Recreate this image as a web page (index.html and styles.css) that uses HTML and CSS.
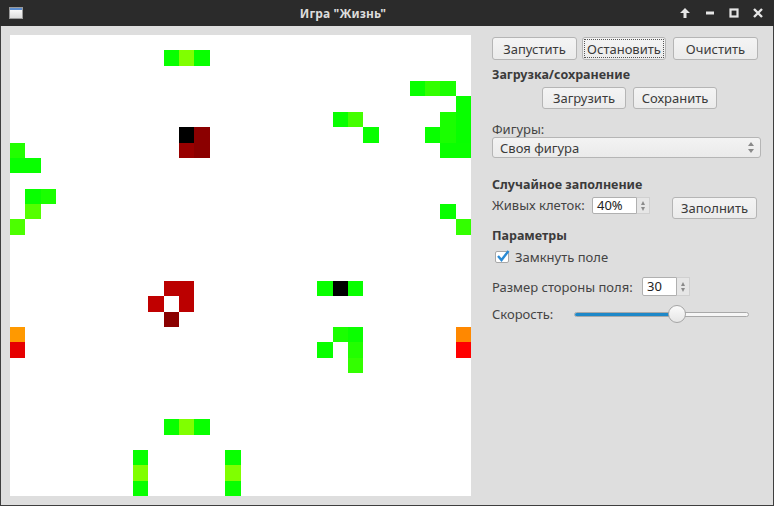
FILE: index.html
```html
<!DOCTYPE html>
<html>
<head>
<meta charset="utf-8">
<link rel="stylesheet" href="styles.css">
</head>
<body>
<div class="window">
  <div class="titlebar">
    <div class="app-icon"><span class="app-icon-top"></span></div>
    <div class="title">Игра "Жизнь"</div>
    <div class="controls">
      <svg class="ctl" width="12" height="10" viewBox="0 0 12 10"><path d="M6 0 L11 5 L7.5 5 L7.5 10 L4.5 10 L4.5 5 L1 5 Z" fill="#e6e6e6"/></svg>
      <svg class="ctl" width="10" height="10" viewBox="0 0 10 10"><rect x="1" y="3.5" width="8" height="3" fill="#e6e6e6"/></svg>
      <svg class="ctl" width="10" height="10" viewBox="0 0 10 10"><rect x="1.5" y="1.5" width="7" height="7" fill="none" stroke="#e6e6e6" stroke-width="2.2"/></svg>
      <svg class="ctl" width="10" height="10" viewBox="0 0 10 10"><path d="M1 1 L9 9 M9 1 L1 9" stroke="#e6e6e6" stroke-width="2.4"/></svg>
    </div>
  </div>
  <div class="content">
    <div class="board">
      <div class="cell" style="grid-area:2/11;background:#08ff00"></div>
      <div class="cell" style="grid-area:2/12;background:#80ff00"></div>
      <div class="cell" style="grid-area:2/13;background:#08ff00"></div>
      <div class="cell" style="grid-area:4/27;background:#08ff00"></div>
      <div class="cell" style="grid-area:4/28;background:#33ff00"></div>
      <div class="cell" style="grid-area:4/29;background:#1aff00"></div>
      <div class="cell" style="grid-area:5/30;background:#08ff00"></div>
      <div class="cell" style="grid-area:6/22;background:#08ff00"></div>
      <div class="cell" style="grid-area:6/23;background:#44ff00"></div>
      <div class="cell" style="grid-area:6/29;background:#1aff00"></div>
      <div class="cell" style="grid-area:6/30;background:#08ff00"></div>
      <div class="cell" style="grid-area:7/12;background:#000000"></div>
      <div class="cell" style="grid-area:7/13;background:#8b0000"></div>
      <div class="cell" style="grid-area:7/24;background:#08ff00"></div>
      <div class="cell" style="grid-area:7/28;background:#08ff00"></div>
      <div class="cell" style="grid-area:7/29;background:#1aff00"></div>
      <div class="cell" style="grid-area:7/30;background:#08ff00"></div>
      <div class="cell" style="grid-area:8/1;background:#22ff00"></div>
      <div class="cell" style="grid-area:8/12;background:#990000"></div>
      <div class="cell" style="grid-area:8/13;background:#8b0000"></div>
      <div class="cell" style="grid-area:8/29;background:#0aff00"></div>
      <div class="cell" style="grid-area:8/30;background:#0aff00"></div>
      <div class="cell" style="grid-area:9/1;background:#08ff00"></div>
      <div class="cell" style="grid-area:9/2;background:#08ff00"></div>
      <div class="cell" style="grid-area:11/2;background:#08ff00"></div>
      <div class="cell" style="grid-area:11/3;background:#1aff00"></div>
      <div class="cell" style="grid-area:12/2;background:#55ff00"></div>
      <div class="cell" style="grid-area:12/29;background:#08ff00"></div>
      <div class="cell" style="grid-area:13/1;background:#4cff00"></div>
      <div class="cell" style="grid-area:13/30;background:#33ff00"></div>
      <div class="cell" style="grid-area:17/11;background:#bb0000"></div>
      <div class="cell" style="grid-area:17/12;background:#bb0000"></div>
      <div class="cell" style="grid-area:17/21;background:#08ff00"></div>
      <div class="cell" style="grid-area:17/22;background:#000000"></div>
      <div class="cell" style="grid-area:17/23;background:#08ff00"></div>
      <div class="cell" style="grid-area:18/10;background:#c00000"></div>
      <div class="cell" style="grid-area:18/12;background:#bb0000"></div>
      <div class="cell" style="grid-area:19/11;background:#8b0000"></div>
      <div class="cell" style="grid-area:20/1;background:#ff9900"></div>
      <div class="cell" style="grid-area:20/22;background:#1aff00"></div>
      <div class="cell" style="grid-area:20/23;background:#0aff00"></div>
      <div class="cell" style="grid-area:20/30;background:#ff8800"></div>
      <div class="cell" style="grid-area:21/1;background:#e60000"></div>
      <div class="cell" style="grid-area:21/21;background:#08ff00"></div>
      <div class="cell" style="grid-area:21/23;background:#22ff00"></div>
      <div class="cell" style="grid-area:21/30;background:#ff0000"></div>
      <div class="cell" style="grid-area:22/23;background:#33ff00"></div>
      <div class="cell" style="grid-area:26/11;background:#08ff00"></div>
      <div class="cell" style="grid-area:26/12;background:#80ff00"></div>
      <div class="cell" style="grid-area:26/13;background:#08ff00"></div>
      <div class="cell" style="grid-area:28/9;background:#08ff00"></div>
      <div class="cell" style="grid-area:28/15;background:#08ff00"></div>
      <div class="cell" style="grid-area:29/9;background:#80ff00"></div>
      <div class="cell" style="grid-area:29/15;background:#80ff00"></div>
      <div class="cell" style="grid-area:30/9;background:#08ff00"></div>
      <div class="cell" style="grid-area:30/15;background:#08ff00"></div>
    </div>
    <div class="panel">
      <div class="row-main">
        <button class="btn btn-start">Запустить</button>
        <button class="btn btn-stop focused"><span class="focus-ring">Остановить</span></button>
        <button class="btn btn-clear">Очистить</button>
      </div>
      <div class="heading h-load">Загрузка/сохранение</div>
      <div class="row-load">
        <button class="btn btn-load">Загрузить</button>
        <button class="btn btn-save">Сохранить</button>
      </div>
      <div class="label l-figures">Фигуры:</div>
      <div class="combo">
        <span class="combo-text">Своя фигура</span>
        <span class="combo-arrows"><span class="tri-up"></span><span class="tri-down"></span></span>
      </div>
      <div class="heading h-random">Случайное заполнение</div>
      <div class="row-random">
        <span class="label l-cells">Живых клеток:</span>
        <div class="spin spin-pct">
          <span class="spin-text">40%</span>
          <span class="spin-arrows"><span class="tri-up"></span><span class="tri-down"></span></span>
        </div>
        <button class="btn btn-fill">Заполнить</button>
      </div>
      <div class="heading h-params">Параметры</div>
      <div class="row-check">
        <span class="checkbox">
          <svg width="14" height="12" viewBox="0 0 14 12"><path d="M2 6 L5.5 10 L12.5 1" fill="none" stroke="#2a8ad4" stroke-width="2.4"/></svg>
        </span>
        <span class="label">Замкнуть поле</span>
      </div>
      <div class="row-size">
        <span class="label">Размер стороны поля:</span>
        <div class="spin spin-size">
          <span class="spin-text">30</span>
          <span class="spin-arrows"><span class="tri-up"></span><span class="tri-down"></span></span>
        </div>
      </div>
      <div class="row-speed">
        <span class="label">Скорость:</span>
        <div class="slider">
          <div class="groove"><div class="groove-fill"></div></div>
          <div class="handle"></div>
        </div>
      </div>
    </div>
  </div>
</div>
</body>
</html>
```

FILE: styles.css
```css
* { box-sizing: border-box; }
html, body { margin: 0; padding: 0; }
body {
  width: 774px;
  height: 506px;
  overflow: hidden;
  font-family: "Noto Sans", "Open Sans", sans-serif;
  font-size: 13px;
  color: #3b3b3b;
  background: #dedede;
}
.window {
  width: 774px;
  height: 506px;
  display: flex;
  flex-direction: column;
}
.titlebar {
  height: 26px;
  background: #2b2b2b;
  display: flex;
  align-items: center;
  position: relative;
  flex: none;
}
.app-icon {
  margin-left: 9px;
  width: 14px;
  height: 12px;
  background: linear-gradient(#ffffff, #dcdcdc);
  border: 1px solid #9a9a9a;
  display: flex;
  flex-direction: column;
}
.app-icon-top {
  height: 2px;
  background: #5b8dd0;
}
.title {
  flex: 1;
  text-align: center;
  color: #dcdcdc;
  font-weight: bold;
  font-size: 12px;
  padding-right: 16px;
  letter-spacing: 0.1px;
}
.controls {
  display: flex;
  align-items: center;
  gap: 14px;
  margin-right: 11px;
}
.ctl { display: block; }
.content {
  flex: 1;
  display: flex;
  gap: 21px;
  padding: 9px 11px 8px 9px;
  border-left: 1px solid #3e3e3e;
  border-right: 1px solid #3e3e3e;
  border-bottom: 1px solid #3e3e3e;
}
.board {
  width: 461px;
  height: 461px;
  background: #ffffff;
  display: grid;
  grid-template-columns: repeat(30, 1fr);
  grid-template-rows: repeat(30, 1fr);
  flex: none;
}
.panel {
  width: 269px;
  display: flex;
  flex-direction: column;
}
.btn {
  font-family: inherit;
  font-size: 13px;
  color: #3b3b3b;
  background: linear-gradient(#f4f4f4, #ebebeb);
  border: 1px solid #b5b5b5;
  border-radius: 3px;
  padding: 0;
  display: flex;
  align-items: center;
  justify-content: center;
}
.row-main {
  margin-top: 2px;
  display: flex;
  height: 23px;
}
.btn-start { width: 85px; }
.btn-stop { width: 84px; margin-left: 5px; }
.btn-clear { width: 85px; margin-left: 7px; }
.focus-ring {
  border: 1px dotted #555;
  display: flex;
  align-items: center;
  justify-content: center;
  width: 80px;
  height: 19px;
}
.heading {
  font-weight: bold;
  font-size: 12.5px;
  height: 18px;
  line-height: 18px;
  color: #3b3b3b;
}
.h-load { margin-top: 6px; }
.row-load {
  margin-top: 3px;
  display: flex;
  height: 22px;
  padding-left: 50px;
  gap: 7px;
}
.btn-load, .btn-save { width: 84px; }
.label {
  color: #444;
  white-space: nowrap;
}
.l-figures {
  margin-top: 12px;
  height: 16px;
  line-height: 16px;
}
.combo {
  height: 21px;
  border: 1px solid #b5b5b5;
  border-radius: 3px;
  background: linear-gradient(#f3f3f3, #eaeaea);
  display: flex;
  align-items: center;
  justify-content: space-between;
  padding: 0 6px 0 7px;
}
.combo-arrows, .spin-arrows {
  display: flex;
  flex-direction: column;
  align-items: center;
  gap: 3px;
}
.tri-up {
  width: 0; height: 0;
  border-left: 3px solid transparent;
  border-right: 3px solid transparent;
  border-bottom: 4px solid #8a8a8a;
}
.tri-down {
  width: 0; height: 0;
  border-left: 3px solid transparent;
  border-right: 3px solid transparent;
  border-top: 4px solid #8a8a8a;
}
.h-random { margin-top: 18px; }
.row-random {
  margin-top: 3px;
  height: 22px;
  display: flex;
  align-items: flex-start;
}
.l-cells {
  height: 17px;
  line-height: 16px;
  width: 100px;
}
.spin {
  display: flex;
  height: 17px;
}
.spin-text {
  background: #ffffff;
  border: 1px solid #b0b0b0;
  border-radius: 2px 0 0 2px;
  line-height: 15px;
  padding-left: 4px;
  color: #222;
}
.spin-arrows {
  width: 13px;
  justify-content: center;
  background: #e6e6e6;
  border: 1px solid #d0d0d0;
  border-left: none;
  gap: 2px;
}
.spin-arrows .tri-up, .spin-arrows .tri-down {
  border-left-width: 2.5px;
  border-right-width: 2.5px;
}
.spin-pct .spin-text { width: 45px; }
.btn-fill {
  width: 85px;
  height: 22px;
  margin-left: 22px;
}
.h-params { margin-top: 8px; }
.row-check {
  margin-top: 4px;
  height: 16px;
  display: flex;
  align-items: center;
  padding-left: 3px;
  gap: 6px;
}
.checkbox {
  width: 14px;
  height: 12px;
  border: 1px solid #a8a8a8;
  border-radius: 2px;
  background: #ffffff;
  display: flex;
  align-items: center;
  justify-content: center;
  position: relative;
}
.checkbox svg {
  position: absolute;
  left: 0;
  top: -2px;
}
.row-size {
  margin-top: 12px;
  height: 19px;
  display: flex;
  align-items: center;
}
.row-size .label { width: 150px; }
.spin-size { height: 19px; }
.spin-size .spin-text { width: 35px; line-height: 17px; }
.row-speed {
  margin-top: 9px;
  height: 18px;
  display: flex;
  align-items: center;
}
.row-speed .label { width: 82px; }
.slider {
  width: 175px;
  height: 18px;
  position: relative;
  display: flex;
  align-items: center;
}
.groove {
  width: 100%;
  height: 5px;
  border: 1px solid #a9a9a9;
  border-radius: 3px;
  background: #f6f6f6;
  overflow: hidden;
}
.groove-fill {
  width: 100px;
  height: 100%;
  background: #1e88c8;
  border-right: 1px solid #1a5f8c;
}
.handle {
  position: absolute;
  left: 94px;
  top: 0;
  width: 18px;
  height: 18px;
  border-radius: 50%;
  border: 1px solid #a5a5a5;
  background: linear-gradient(#fbfbfb, #e6e6e6);
}
```
